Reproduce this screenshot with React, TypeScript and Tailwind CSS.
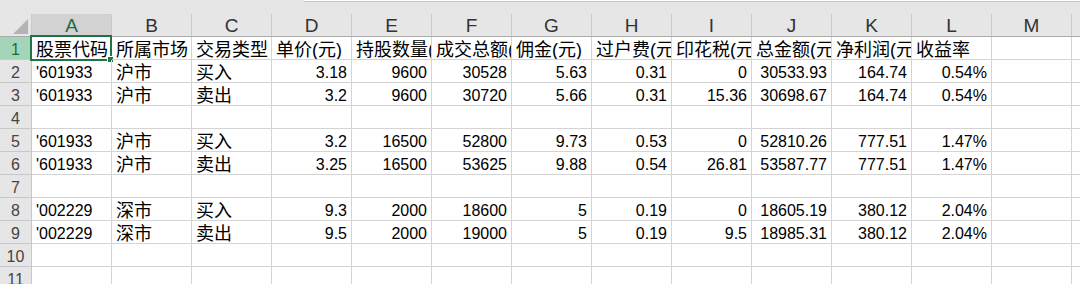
const COLS = ['A', 'B', 'C', 'D', 'E', 'F', 'G', 'H', 'I', 'J', 'K', 'L', 'M']

const HEAD = [
  '股票代码',
  '所属市场',
  '交易类型',
  '单价(元)',
  '持股数量(股)',
  '成交总额(元)',
  '佣金(元)',
  '过户费(元)',
  '印花税(元)',
  '总金额(元)',
  '净利润(元)',
  '收益率',
]

const ROWS: (string[] | null)[] = [
  ["'601933", '沪市', '买入', '3.18', '9600', '30528', '5.63', '0.31', '0', '30533.93', '164.74', '0.54%'],
  ["'601933", '沪市', '卖出', '3.2', '9600', '30720', '5.66', '0.31', '15.36', '30698.67', '164.74', '0.54%'],
  null,
  ["'601933", '沪市', '买入', '3.2', '16500', '52800', '9.73', '0.53', '0', '52810.26', '777.51', '1.47%'],
  ["'601933", '沪市', '卖出', '3.25', '16500', '53625', '9.88', '0.54', '26.81', '53587.77', '777.51', '1.47%'],
  null,
  ["'002229", '深市', '买入', '9.3', '2000', '18600', '5', '0.19', '0', '18605.19', '380.12', '2.04%'],
  ["'002229", '深市', '卖出', '9.5', '2000', '19000', '5', '0.19', '9.5', '18985.31', '380.12', '2.04%'],
  null,
  null,
]

function Cell({ text, kind, selected }: { text?: string; kind: 'cjk' | 'num' | 'left'; selected?: boolean }) {
  const align = kind === 'num' ? 'justify-end pr-[4px]' : 'justify-start pl-[4px]'
  const size = kind === 'cjk' ? 'text-[18px] pt-[4px]' : 'text-[16px] pt-[3px]'
  return (
    <div className="relative h-[23px] w-[80px] shrink-0 border-r border-b border-[#d4d4d4]">
      <div className={`flex h-full items-center overflow-hidden whitespace-nowrap leading-none text-black ${align} ${size}`}>
        {text}
      </div>
      {selected && (
        <>
          <div className="absolute top-[-2px] right-[-1px] bottom-[-2px] left-[-2px] border-2 border-[#217346]" />
          <div className="absolute top-[19px] left-[75px] h-[7px] w-[7px] border border-white bg-[#217346]" />
        </>
      )}
    </div>
  )
}

function RowHead({ n, active }: { n: number; active?: boolean }) {
  return (
    <div
      className={`flex h-[23px] w-[32px] shrink-0 items-center justify-center border-r border-b border-[#c8c8c8] pt-[3px] text-[16px] leading-none ${
        active ? 'bg-[#a3d6b8] text-[#1d6b40]' : 'bg-[#e6e6e6] text-[#444]'
      }`}
    >
      {n}
    </div>
  )
}

export default function App() {
  return (
    <div className="h-[284px] w-[1080px] overflow-hidden bg-white font-['Liberation_Sans','Noto_Sans_CJK_SC',sans-serif]">
      {/* formula bar edge */}
      <div className="flex h-[14px] bg-[#e6e6e6]">
        <div className="w-[304px]" />
        <div className="h-[2px] flex-1 border-b border-[#c6c6c6] bg-white" />
      </div>

      {/* column headers */}
      <div className="flex h-[23px] border-b border-[#ababab] bg-[#e6e6e6]">
        <div className="flex w-[32px] shrink-0 items-end justify-end border-r border-[#cacaca] pr-[3px] pb-[2px]">
          <svg width="15" height="15" viewBox="0 0 15 15">
            <polygon points="15,0 15,15 0,15" fill="#b4b4b4" />
          </svg>
        </div>
        {COLS.map((c, i) => (
          <div
            key={c}
            className={`flex w-[80px] shrink-0 items-center justify-center border-r border-[#cacaca] pt-[1px] text-[19px] leading-none ${
              i === 0 ? 'bg-[#d2d2d2] text-[#1d6b40]' : 'text-[#333]'
            }`}
          >
            {c}
          </div>
        ))}
        <div className="flex-1" />
      </div>

      {/* row 1 headers */}
      <div className="flex">
        <RowHead n={1} active />
        {HEAD.map((h, i) => (
          <Cell key={i} text={h} kind="cjk" selected={i === 0} />
        ))}
        <Cell kind="left" />
        <div className="h-[23px] flex-1 border-b border-[#d4d4d4]" />
      </div>

      {ROWS.map((r, ri) => (
        <div key={ri} className="flex">
          <RowHead n={ri + 2} />
          {COLS.map((_, ci) => {
            const v = r && ci < 12 ? r[ci] : undefined
            const kind = ci === 0 ? 'left' : ci < 3 ? 'cjk' : ci < 12 ? 'num' : 'left'
            return <Cell key={ci} text={v} kind={kind} />
          })}
          <div className="h-[23px] flex-1 border-b border-[#d4d4d4]" />
        </div>
      ))}
    </div>
  )
}
